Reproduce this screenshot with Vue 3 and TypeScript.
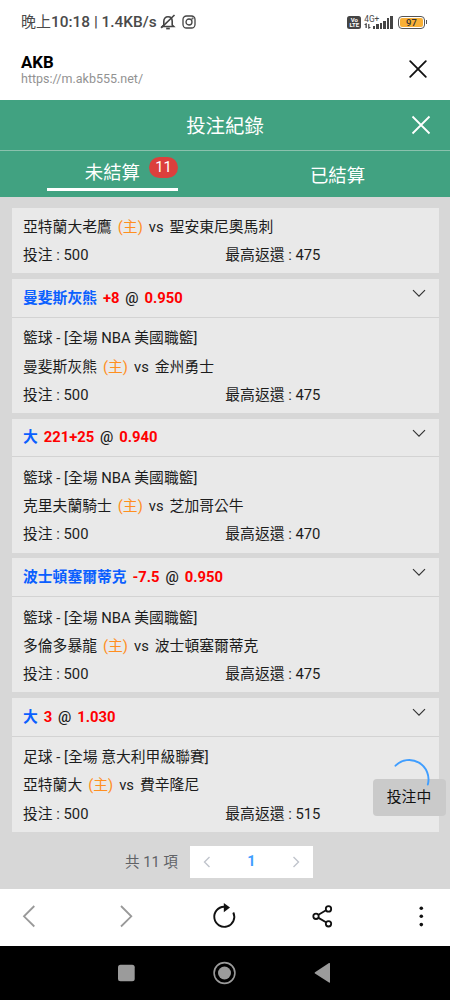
<script setup lang="ts">
interface Bet {
  pick?: string
  line?: string
  odds?: string
  league?: string
  home: string
  away: string
  stake: number
  payout: number
}

const bets: Bet[] = [
  { home: '亞特蘭大老鷹', away: '聖安東尼奧馬刺', stake: 500, payout: 475 },
  { pick: '曼斐斯灰熊', line: '+8', odds: '0.950', league: '籃球 - [全場 NBA 美國職籃]', home: '曼斐斯灰熊', away: '金州勇士', stake: 500, payout: 475 },
  { pick: '大', line: '221+25', odds: '0.940', league: '籃球 - [全場 NBA 美國職籃]', home: '克里夫蘭騎士', away: '芝加哥公牛', stake: 500, payout: 470 },
  { pick: '波士頓塞爾蒂克', line: '-7.5', odds: '0.950', league: '籃球 - [全場 NBA 美國職籃]', home: '多倫多暴龍', away: '波士頓塞爾蒂克', stake: 500, payout: 475 },
  { pick: '大', line: '3', odds: '1.030', league: '足球 - [全場 意大利甲級聯賽]', home: '亞特蘭大', away: '費辛隆尼', stake: 500, payout: 515 },
]
const signalBars = [3, 4.5, 6, 8, 10.5, 13]
</script>

<template>
  <div class="phone">
    <div class="status">
      <span class="clock"><span>晚上</span>10:18 | 1.4KB/s</span>
      <svg class="bell" width="16" height="16" viewBox="0 0 16 16" fill="none" stroke="#444" stroke-width="1.600">
        <path d="M3.800 11V7.300C3.800 4.600 5.500 2.800 8 2.800s4.200 1.800 4.200 4.500V11l1.500 1.500H2.300z" />
        <path d="M14.500 1L1.200 13.800" />
        <path d="M6.200 14.500h3.600" stroke-width="1.800" />
      </svg>
      <svg class="insta" width="14" height="14" viewBox="0 0 14 14" fill="none" stroke="#444" stroke-width="1.300">
        <rect x="1" y="1" width="12" height="12" rx="3.500" />
        <circle cx="7" cy="7" r="3" />
        <circle cx="10.500" cy="3.500" r=".4" />
      </svg>
      <span class="fill"></span>
      <span class="volte"><b>Vo</b><b>LTE</b></span>
      <span class="net">
        <span class="gen">4G+</span>
        <svg width="7" height="6" viewBox="0 0 7 6" fill="#444"><path d="M1.500 5V2H0L2.200 0l.6.600V5zM4.200 1h1.200v3H7L4.700 6l-.5-.500z" /></svg>
      </span>
      <span class="bars"><i v-for="h in signalBars" :key="h" :style="{ height: h + 'px' }"></i></span>
      <span class="battery"><span>97</span></span>
      <span class="nub"></span>
    </div>

    <div class="site">
      <div>
        <div class="name">AKB</div>
        <div class="url">https://m.akb555.net/</div>
      </div>
      <svg width="18" height="18" viewBox="0 0 18 18" stroke="#111" stroke-width="1.800" stroke-linecap="round"><path d="M1.200 1.200l15.600 15.600M16.800 1.200L1.200 16.800" /></svg>
    </div>

    <div class="title">
      <span>投注紀錄</span>
      <svg class="close" width="20" height="20" viewBox="0 0 20 20" stroke="#fff" stroke-width="1.800"><path d="M1.500 1.500l17 17M18.500 1.500l-17 17" /></svg>
    </div>
    <div class="tabs">
      <div class="tab"><div class="active"><span>未結算</span><em>11</em></div></div>
      <div class="tab other">已結算</div>
    </div>

    <div class="content">
      <div class="list">
        <div v-for="(b, i) in bets" :key="i" class="card">
          <div v-if="b.pick" class="head">
            <span class="pick">{{ b.pick }}</span><span class="red">{{ b.line }}</span><span class="at">@</span><span class="red">{{ b.odds }}</span>
            <svg width="14" height="9" viewBox="0 0 14 9" fill="none" stroke="#333" stroke-width="1.150"><path d="M1 1.200l6 6 6-6" /></svg>
          </div>
          <div class="body" :class="{ cut: !b.pick }">
            <div v-if="b.league" class="row">{{ b.league }}</div>
            <div class="row match"><span>{{ b.home }}</span><span class="host">(主)</span><span class="vs">vs</span><span>{{ b.away }}</span></div>
            <div class="row money"><span>投注 : {{ b.stake }}</span><span>最高返還 : {{ b.payout }}</span></div>
          </div>
        </div>
      </div>

      <div class="pages">
        <span class="total">共 11 項</span>
        <div class="pager">
          <svg width="8" height="12" viewBox="0 0 8 12" fill="none" stroke="#c0c4cc" stroke-width="1.400"><path d="M6.500 1L1.500 6l5 5" /></svg>
          <b>1</b>
          <svg width="8" height="12" viewBox="0 0 8 12" fill="none" stroke="#c0c4cc" stroke-width="1.400"><path d="M1.500 1l5 5-5 5" /></svg>
        </div>
      </div>

      <div class="pending">投注中
        <svg class="spinner" width="42" height="42" viewBox="0 0 42 42" fill="none" stroke="#409eff" stroke-width="1.900" stroke-linecap="round"><path d="M7.500 7.700A19.300 19.300 0 0 1 39.800 26.500" /></svg>
      </div>
    </div>

    <div class="toolbar">
      <svg width="450" height="57" viewBox="0 889 450 57" fill="none">
        <g stroke="#999" stroke-width="1.800"><path d="M34.300 906l-10.300 10.300 10.300 10.200M121 906l10.300 10.300-10.300 10.200" /></g>
        <path d="M224 906.800A10 10 0 1 0 233.300 912.500" stroke="#111" stroke-width="1.900" />
        <path d="M223.800 903v9.200l6.200-4.600z" fill="#111" />
        <g stroke="#111" stroke-width="1.800"><path d="M318.500 914.700l7.500-4.400M318.500 917.900l7.500 4.400" /><circle cx="316" cy="916.300" r="2.700" /><circle cx="328.500" cy="908.900" r="2.700" /><circle cx="328.500" cy="923.800" r="2.700" /></g>
        <g fill="#111"><circle cx="421.300" cy="908.200" r="1.800" /><circle cx="421.300" cy="916.300" r="1.800" /><circle cx="421.300" cy="924.600" r="1.800" /></g>
      </svg>
    </div>
    <div class="system">
      <svg width="450" height="54" viewBox="0 946 450 54" fill="#9b9b9b">
        <rect x="118" y="964.700" width="16.700" height="16.600" rx="2.500" />
        <circle cx="224.500" cy="973" r="6.500" />
        <circle cx="224.500" cy="973" r="10.400" fill="none" stroke="#9b9b9b" stroke-width="1.600" />
        <path d="M315 972.300l14-9.200q1-.6 1 .6v18.300q0 1.200-1 .6l-14-9q-.9-.700 0-1.300z" />
      </svg>
    </div>
  </div>
</template>

<style>
body { background: #fff; }
</style>

<style scoped>
.phone {
  width: 450px;
  height: 1000px;
  overflow: hidden;
  display: flex;
  flex-direction: column;
  background: #fff;
  color: #1c1c1c;
  font-family: Roboto, "Noto Sans CJK TC", sans-serif;
}
.phone svg { display: block; flex: none; }
.phone > div { flex: none; box-sizing: border-box; }
.status {
  height: 44px;
  padding: 0 23px 0 21px;
  display: flex;
  align-items: center;
  color: #4a4a4a;
}
.clock { font-size: 15.400px; font-weight: 500; line-height: 20px; white-space: nowrap; width: 138.500px; }
.clock span { font-weight: 400; font-size: 15px; }
.insta { margin-left: 6px; }
.fill { flex: 1; }
.volte {
  width: 14px;
  height: 13px;
  border-radius: 2.500px;
  background: #444;
  color: #fff;
  display: flex;
  flex-direction: column;
  align-items: center;
  justify-content: center;
  font-size: 6px;
  line-height: 5px;
}
.net { margin-left: 3px; width: 8px; height: 15px; display: flex; flex-direction: column; }
.gen { font-size: 8.300px; line-height: 8px; width: 18px; }
.bars { height: 13px; margin-left: .5px; display: flex; align-items: flex-end; gap: 1.200px; }
.bars i { width: 2.300px; background: #444; }
.battery {
  margin-left: 5.500px;
  width: 27px;
  height: 13px;
  box-sizing: border-box;
  border: 1px solid #555;
  border-radius: 4px;
  padding: 1px;
  display: flex;
}
.battery span {
  flex: 1;
  background: #f9b036;
  border-radius: 2px;
  font-size: 9.500px;
  line-height: 10px;
  font-weight: 500;
  text-align: center;
  color: #333;
}
.nub { width: 1.500px; height: 4px; background: #555; margin-left: .5px; }
.site {
  height: 55.500px;
  padding: 7.500px 23px 0 21px;
  display: flex;
  justify-content: space-between;
}
.site svg { margin-top: 8px; }
.name { font-size: 16.800px; line-height: 20px; font-weight: 700; color: #000; }
.url { font-size: 12.500px; line-height: 14px; color: #929292; }
.title {
  height: 51.500px;
  background: #41a281;
  border-bottom: 1px solid #8ac1ad;
  color: #fff;
  font-size: 19.400px;
  display: grid;
  grid-template-columns: 30px 1fr 30px;
  align-items: center;
}
.title span { grid-column: 2; text-align: center; }
.title .close { justify-self: end; margin-right: 19px; }
.tabs {
  height: 46px;
  background: #41a281;
  color: #fff;
  font-size: 18.400px;
  display: grid;
  grid-template-columns: 1fr 1fr;
}
.tab { display: flex; justify-content: center; }
.active {
  width: 131px;
  height: 39.500px;
  box-sizing: border-box;
  border-bottom: 3.500px solid #fff;
  display: flex;
  justify-content: flex-end;
}
.active span { line-height: 43.500px; margin-right: 9px; }
.active em {
  width: 29px;
  height: 21px;
  margin-top: 6px;
  border-radius: 11px;
  background: #dc3f3c;
  font: normal 14.800px/21px Roboto, sans-serif;
  text-align: center;
}
.other { line-height: 49px; }
.content {
  position: relative;
  height: 692px;
  background: #d7d7d7;
  padding: 11px 11px 0 11.700px;
}
.list { display: flex; flex-direction: column; gap: 5.700px; }
.card { background: #e9e9e9; font-size: 14.800px; }
.head {
  height: 38.700px;
  box-sizing: border-box;
  border-bottom: 1px solid #d3d3d3;
  padding: 0 13px 0 11.300px;
  display: flex;
  align-items: center;
  gap: 5.900px;
  line-height: 36.600px;
  color: #f00;
}
.head svg { margin: 0 0 8.400px auto; }
.pick { color: #0a5fff; font-weight: 700; }
.red { font-weight: 700; }
.at { color: #1c1c1c; font-weight: 500; }
.body { padding: 6.700px 11.300px 4.300px; }
.body.cut { padding: 4.600px 11.300px 4.600px; }
.row { height: 28.100px; line-height: 28.100px; white-space: nowrap; }
.match { display: flex; gap: 6px; }
.host { color: #ff8f1f; }
.money { display: grid; grid-template-columns: 202.300px 1fr; }
.pages { margin-top: 13.800px; display: flex; align-items: center; padding-left: 113.300px; }
.total { width: 65px; font-size: 14.600px; line-height: 20px; color: #606266; white-space: nowrap; }
.pager {
  width: 123px;
  height: 32px;
  box-sizing: border-box;
  padding: 0 13px;
  background: #fff;
  display: flex;
  align-items: center;
  justify-content: space-between;
}
.pager b { color: #409eff; font-size: 14.500px; }
.pending {
  position: absolute;
  right: 4.500px;
  top: 582px;
  width: 73px;
  height: 37px;
  border-radius: 4px;
  background: #cacaca;
  color: #111;
  font-size: 14.800px;
  line-height: 37px;
  text-align: center;
}
.spinner { position: absolute; left: 15.500px; top: -21px; }
.toolbar { height: 57px; }
.system { height: 54px; background: #000; }
</style>
